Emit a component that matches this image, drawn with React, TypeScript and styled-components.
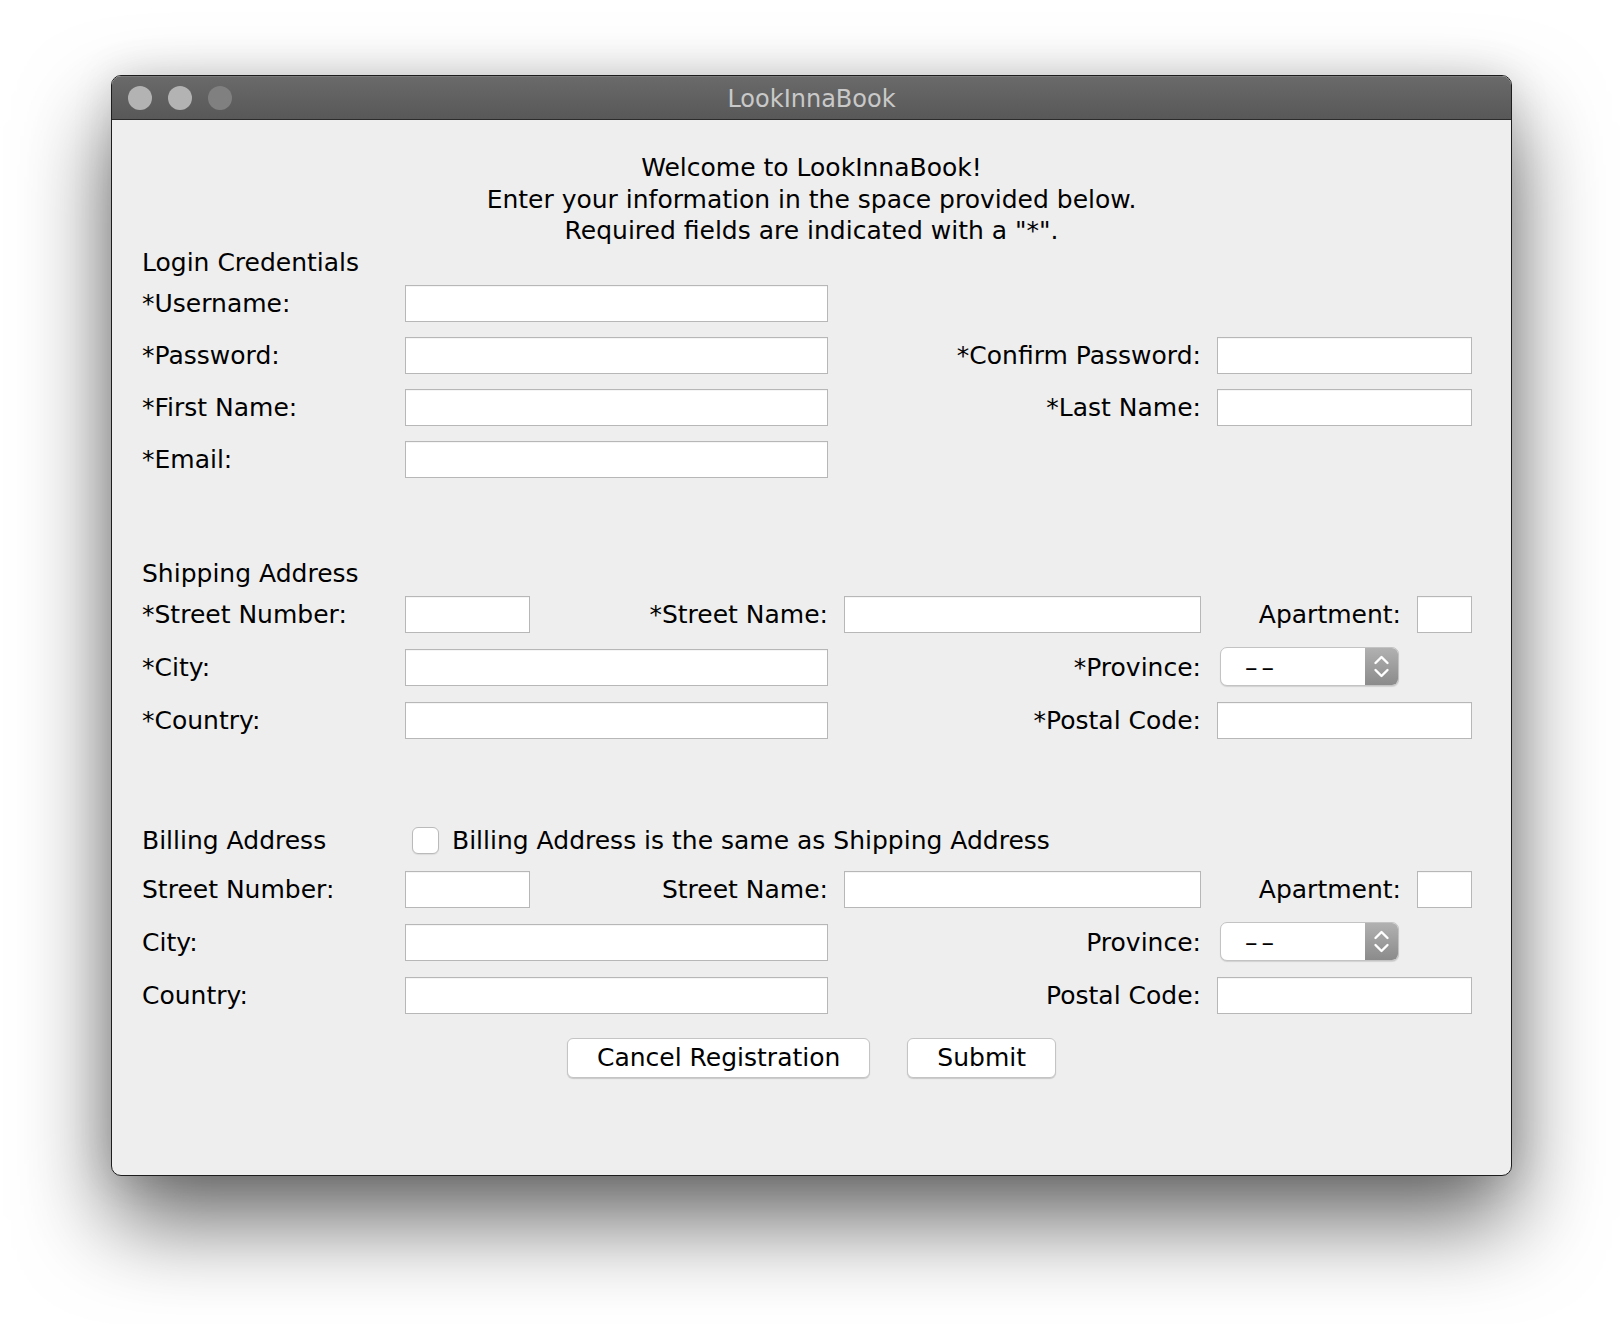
import React from "react";
import styled, { createGlobalStyle } from "styled-components";

const GlobalStyle = createGlobalStyle`
  html, body { margin: 0; padding: 0; background: #ffffff; }
  body {
    font-family: "DejaVu Sans", "Liberation Sans", sans-serif;
    color: #000000;
  }
  * { box-sizing: border-box; }
`;

const Page = styled.div`
  width: 1624px;
  height: 1324px;
  padding: 75px 0 0 111px;
  background: #ffffff;
  overflow: hidden;
`;

const Window = styled.div`
  width: 1401px;
  height: 1101px;
  border: 1px solid #1d1d1d;
  border-radius: 10px;
  background: #eeeeee;
  box-shadow: 0 45px 90px rgba(0, 0, 0, 0.6), 0 0 40px rgba(0, 0, 0, 0.12);
  display: flex;
  flex-direction: column;
  overflow: hidden;
`;

const TitleBar = styled.div`
  flex: none;
  height: 44px;
  display: grid;
  grid-template-columns: 1fr auto 1fr;
  align-items: center;
  padding: 0 16px;
  background: linear-gradient(#6a6a6a, #585858);
  border-bottom: 1px solid #2b2b2b;
  box-shadow: inset 0 1px 0 rgba(255, 255, 255, 0.12);
`;

const Lights = styled.div`
  display: flex;
  gap: 16px;
`;

const Light = styled.span<{ $tone: string }>`
  width: 24px;
  height: 24px;
  border-radius: 50%;
  background: ${(p) => p.$tone};
`;

const Title = styled.div`
  font-size: 24px;
  color: #c9c9c9;
  line-height: 30px;
  padding-top: 2px;
`;

const Content = styled.div`
  flex: 1;
  display: flex;
  flex-direction: column;
  padding-top: 32px;
  font-size: 25px;
`;

const Intro = styled.div`
  text-align: center;
  line-height: 31.5px;
`;

const Section = styled.div<{ $top: number }>`
  margin: ${(p) => p.$top}px 0 0 30px;
  display: flex;
  flex-direction: column;
`;

const SectionTitle = styled.div`
  line-height: 31px;
  margin-bottom: 6px;
`;

const FormGrid = styled.div<{ $rows: string }>`
  display: grid;
  grid-template-columns: 247px 125px 282px 357px 184px 55px;
  grid-template-rows: ${(p) => p.$rows};
  column-gap: 16px;
  row-gap: 13px;
  align-items: center;
`;

const Label = styled.div<{ $col: string; $right?: boolean }>`
  grid-column: ${(p) => p.$col};
  text-align: ${(p) => (p.$right ? "right" : "left")};
  line-height: 31px;
  white-space: nowrap;
`;

const TextField = styled.input<{ $col: string }>`
  grid-column: ${(p) => p.$col};
  height: 37px;
  width: 100%;
  margin: 0;
  padding: 0 8px;
  border: 1px solid #b7b7b7;
  border-radius: 0;
  background: #ffffff;
  box-shadow: inset 0 1px 0 rgba(0, 0, 0, 0.04);
  font: inherit;
  outline: none;
`;

const Combo = styled.div<{ $col: string }>`
  grid-column: ${(p) => p.$col};
  align-self: start;
  width: 179px;
  height: 39px;
  margin-left: 3px;
  display: flex;
  border: 1px solid #c3c3c3;
  border-radius: 7px;
  overflow: hidden;
  background: #ffffff;
  box-shadow: 0 1px 1px rgba(0, 0, 0, 0.12);
`;

const ComboValue = styled.div`
  flex: 1;
  display: flex;
  align-items: center;
  padding: 2px 0 0 24px;
  letter-spacing: 4px;
  line-height: 1;
`;

const ComboArrows = styled.div`
  flex: none;
  width: 33px;
  background: linear-gradient(#b1b1b1, #8b8b8b);
  display: flex;
  align-items: center;
  justify-content: center;
`;

const CheckOption = styled.label<{ $col: string }>`
  grid-column: ${(p) => p.$col};
  display: flex;
  align-items: center;
  gap: 13px;
  padding-left: 7px;
  line-height: 31px;
  white-space: nowrap;
`;

const CheckBox = styled.input`
  appearance: none;
  -webkit-appearance: none;
  margin: 0;
  width: 27px;
  height: 27px;
  border: 1px solid #bababa;
  border-radius: 6px;
  background: #ffffff;
  box-shadow: 0 1px 1px rgba(0, 0, 0, 0.08);
`;

const ButtonRow = styled.div`
  display: flex;
  justify-content: center;
  gap: 37px;
  margin-top: 23px;
`;

const PushButton = styled.button`
  height: 40px;
  padding: 0 29px;
  border: 1px solid #c4c4c4;
  border-radius: 6px;
  background: #ffffff;
  box-shadow: 0 1px 1px rgba(0, 0, 0, 0.16);
  font: inherit;
  color: #000000;
  line-height: 1;
`;

const Arrows = () => (
  <svg width="33" height="39" viewBox="0 0 33 39" fill="none">
    <polyline
      points="10.5,16 16.5,10 22.5,16"
      stroke="#ffffff"
      strokeWidth="2.4"
      strokeLinecap="round"
      strokeLinejoin="round"
    />
    <polyline
      points="10.5,23 16.5,29 22.5,23"
      stroke="#ffffff"
      strokeWidth="2.4"
      strokeLinecap="round"
      strokeLinejoin="round"
    />
  </svg>
);

const ProvinceSelect = () => (
  <Combo $col="5">
    <ComboValue>––</ComboValue>
    <ComboArrows>
      <Arrows />
    </ComboArrows>
  </Combo>
);

type AddressProps = { req: boolean };

const AddressRows = ({ req }: AddressProps) => {
  const s = req ? "*" : "";
  return (
    <>
      <Label $col="1">{s}Street Number:</Label>
      <TextField $col="2" type="text" />
      <Label $col="3" $right>
        {s}Street Name:
      </Label>
      <TextField $col="4" type="text" />
      <Label $col="5" $right>
        Apartment:
      </Label>
      <TextField $col="6" type="text" />

      <Label $col="1">{s}City:</Label>
      <TextField $col="2 / 4" type="text" />
      <Label $col="4" $right>
        {s}Province:
      </Label>
      <ProvinceSelect />

      <Label $col="1">{s}Country:</Label>
      <TextField $col="2 / 4" type="text" />
      <Label $col="4" $right>
        {s}Postal Code:
      </Label>
      <TextField $col="5 / 7" type="text" />
    </>
  );
};

export default function App() {
  return (
    <>
      <GlobalStyle />
      <Page>
        <Window>
          <TitleBar>
            <Lights>
              <Light $tone="#b3b3b3" />
              <Light $tone="#b3b3b3" />
              <Light $tone="#808080" />
            </Lights>
            <Title>LookInnaBook</Title>
            <span />
          </TitleBar>
          <Content>
            <Intro>
              Welcome to LookInnaBook!
              <br />
              Enter your information in the space provided below.
              <br />
              Required fields are indicated with a "*".
            </Intro>

            <Section $top={0}>
              <SectionTitle>Login Credentials</SectionTitle>
              <FormGrid $rows="repeat(4, 39px)">
                <Label $col="1">*Username:</Label>
                <TextField $col="2 / 4" type="text" />

                <Label $col="1">*Password:</Label>
                <TextField $col="2 / 4" type="password" />
                <Label $col="4" $right>
                  *Confirm Password:
                </Label>
                <TextField $col="5 / 7" type="password" />

                <Label $col="1">*First Name:</Label>
                <TextField $col="2 / 4" type="text" />
                <Label $col="4" $right>
                  *Last Name:
                </Label>
                <TextField $col="5 / 7" type="text" />

                <Label $col="1">*Email:</Label>
                <TextField $col="2 / 4" type="text" />
              </FormGrid>
            </Section>

            <Section $top={79}>
              <SectionTitle>Shipping Address</SectionTitle>
              <FormGrid $rows="39px 41px 39px">
                <AddressRows req />
              </FormGrid>
            </Section>

            <Section $top={84}>
              <FormGrid $rows="33px 39px 41px 39px">
                <Label $col="1">Billing Address</Label>
                <CheckOption $col="2 / 7">
                  <CheckBox type="checkbox" />
                  Billing Address is the same as Shipping Address
                </CheckOption>
                <AddressRows req={false} />
              </FormGrid>
            </Section>

            <ButtonRow>
              <PushButton type="button">Cancel Registration</PushButton>
              <PushButton type="button">Submit</PushButton>
            </ButtonRow>
          </Content>
        </Window>
      </Page>
    </>
  );
}
